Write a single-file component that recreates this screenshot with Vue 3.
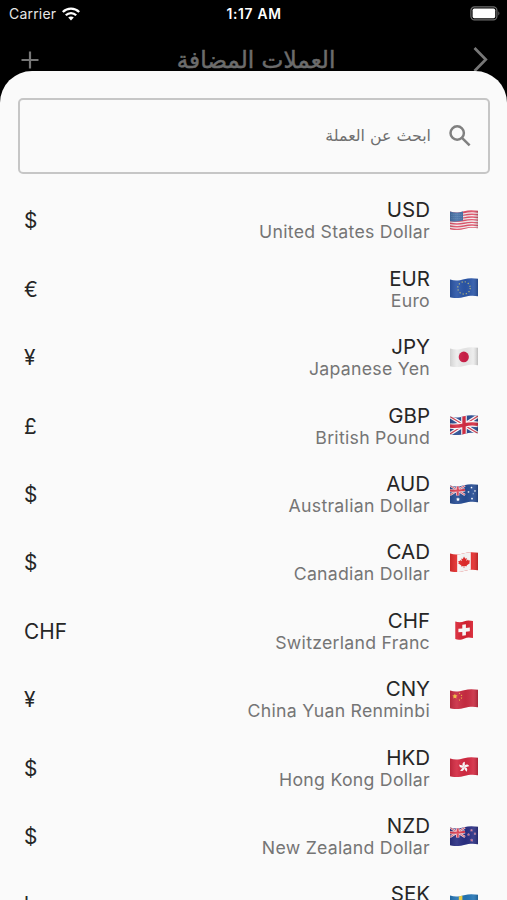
<template>
    <div class="screen" dir="rtl">
        <header class="top">
            <div class="status-bar" dir="ltr">
                <div class="carrier">
                    <span>Carrier</span>
                    <svg width="18" height="14" viewBox="0 0 18 14">
                        <g fill="none" stroke="#fff" stroke-width="2.3">
                            <path d="M0.8 5 C5.4 0.4 12.6 0.4 17.2 5" />
                            <path d="M3.8 8.2 C6.7 5.3 11.3 5.3 14.2 8.2" />
                        </g>
                        <path d="M6.2 10.6 C7.8 9.1 10.2 9.1 11.8 10.6 L9 13.4 Z" fill="#fff" />
                    </svg>
                </div>
                <span class="time">1:17 AM</span>
                <svg class="battery" width="31" height="15" viewBox="0 0 31 15">
                    <rect x="0.9" y="0.9" width="26" height="13" rx="3.6" fill="none" stroke="#6d6d6d" stroke-width="1.2" />
                    <rect x="2.6" y="2.6" width="22.6" height="9.6" rx="1.6" fill="#fff" />
                    <path d="M28.4 5.2 Q30.4 7.4 28.4 9.6 Z" fill="#6d6d6d" />
                </svg>
            </div>
            <div class="nav-bar">
                <svg class="chevron" width="15" height="25" viewBox="0 0 15 25">
                    <path d="M1.5 1 L12.8 12.5 L1.5 24" />
                </svg>
                <h1>العملات المضافة</h1>
                <svg class="plus" width="18" height="18" viewBox="0 0 18 18">
                    <path d="M9 0.5 V17.5 M0.5 9 H17.5" />
                </svg>
            </div>
        </header>

        <main class="sheet">
            <div class="search">
                <svg width="22" height="22" viewBox="0 0 22 22">
                    <circle cx="8.2" cy="8" r="6.7" />
                    <path d="M13 12.8 L20.6 20.4" />
                </svg>
                <span>ابحث عن العملة</span>
            </div>

            <ul class="list">
                <li v-for="item in currencies" :key="item.code" class="row">
                    <svg class="flag" width="28" height="20" viewBox="0 0 28 20">
                        <defs>
                            <clipPath :id="'wave-' + item.code">
                                <path v-if="item.code === 'CHF'" d="M5.3 1.6 C9 2.8 12 2.4 14.5 1.2 S20 0.3 23 1 V18 C19 17 17 17.3 14.5 18.4 S8.5 20.3 5.3 19 Z" />
                                <path v-else d="M0 1.6 C5 3 9 2.6 14 1.2 S23 -0.1 28 0.8 V18.2 C23 17.2 19 17.6 14 18.9 S5 20.6 0 19.2 Z" />
                            </clipPath>
                            <linearGradient :id="'shade-' + item.code">
                                <stop offset="0" stop-color="#000" stop-opacity="0.12" />
                                <stop offset="0.25" stop-color="#fff" stop-opacity="0.08" />
                                <stop offset="0.55" stop-color="#000" stop-opacity="0.04" />
                                <stop offset="0.82" stop-color="#fff" stop-opacity="0.08" />
                                <stop offset="1" stop-color="#000" stop-opacity="0.2" />
                            </linearGradient>
                        </defs>
                        <g :clip-path="`url(#wave-${item.code})`">
                            <rect width="28" height="20" :fill="item.color" />

                            <g v-if="item.code === 'USD'">
                                <path
                                    v-for="n in 6"
                                    :key="n"
                                    :d="`M0 ${n * 2.7 + 1.1} q7 1.6 14 0 t14 -0.4`"
                                    fill="none"
                                    stroke="#f6edf0"
                                    stroke-width="1.3"
                                />
                                <path d="M0 0 H13 V10.6 Q6 12.4 0 11.2 Z" fill="#4671a8" />
                                <path d="M1.5 4.3 H12 M1.5 6.5 H12 M1.5 8.7 H12" stroke="#7fa2c8" stroke-width="0.7" stroke-dasharray="0.8 1.2" />
                            </g>

                            <circle
                                v-else-if="item.code === 'EUR'"
                                cx="14"
                                cy="9.9"
                                r="6.2"
                                fill="none"
                                stroke="#b3b67c"
                                stroke-width="1.2"
                                stroke-dasharray="1.2 2.046"
                            />

                            <ellipse v-else-if="item.code === 'JPY'" cx="13.8" cy="9.9" rx="5.1" ry="5.3" fill="#cd1f48" />

                            <g v-else-if="item.code === 'GBP'" fill="none">
                                <path d="M0 1.5 L28 18.5 M0 19 L28 1" stroke="#fff" stroke-width="3.6" />
                                <path d="M0 1.5 L28 18.5 M0 19 L28 1" stroke="#d33d50" stroke-width="1.1" />
                                <path d="M14 0 V20 M0 11 Q7 11.8 14 10 T28 9.4" stroke="#fff" stroke-width="5.6" />
                                <path d="M14 0 V20 M0 11 Q7 11.8 14 10 T28 9.4" stroke="#d52d43" stroke-width="3.4" />
                            </g>

                            <g v-else-if="item.code === 'AUD' || item.code === 'NZD'">
                                <g fill="none">
                                    <path d="M0 1.5 L15 11 M0 11 L15 1.5" stroke="#f2dbe3" stroke-width="2.2" />
                                    <path d="M0 1.5 L15 11 M0 11 L15 1.5" stroke="#d64b5e" stroke-width="0.8" />
                                    <path d="M7.7 0 V11.4 M0 6.6 Q7 7.4 15 5.8" stroke="#f2dbe3" stroke-width="3.4" />
                                    <path d="M7.7 0 V11.4 M0 6.6 Q7 7.4 15 5.8" stroke="#dc3e50" stroke-width="2" />
                                </g>
                                <g v-if="item.code === 'AUD'" fill="#fff">
                                    <path :d="star(8, 15.4, 2.1)" />
                                    <path :d="star(21.5, 3.6, 1.2)" />
                                    <path :d="star(18.5, 8, 1.2)" />
                                    <path :d="star(25, 7, 1.2)" />
                                    <path :d="star(22, 14.6, 1.3)" />
                                    <circle cx="23.2" cy="9.8" r="0.5" />
                                </g>
                                <g v-else fill="#e04560" stroke="#d9bfd8" stroke-width="0.4">
                                    <path :d="star(21.5, 4.3, 1.2)" />
                                    <path :d="star(18.5, 8.6, 1.2)" />
                                    <path :d="star(25, 7.7, 1.1)" />
                                    <path :d="star(21.7, 14.2, 1.4)" />
                                </g>
                            </g>

                            <g v-else-if="item.code === 'CAD'">
                                <path d="M7.2 0 H20.8 V20 H7.2 Z" fill="#fafafa" />
                                <path
                                    d="M14 4.4 L15.3 6.8 L16.8 6 L16.3 9 L18 7.5 L18.5 8.6 L20 8.4 L19.3 10.4 L20 11 L16.6 13.4 L16.9 14.3 L14.3 13.9 V16 H13.7 V14 L11.1 14.5 L11.4 13.5 L8 11.3 L8.8 10.7 L8.2 8.9 L9.7 9 L10.1 7.9 L11.8 9.3 L11.3 6.4 L12.8 7 Z"
                                    fill="#e32b2b"
                                />
                            </g>

                            <path v-else-if="item.code === 'CHF'" d="M12.3 4.7 L15.9 4.2 V8 L19.8 7.6 V11.2 L15.9 11.7 V15.3 L12.3 15.8 V12.1 L8.4 12.3 V8.7 L12.3 8.4 Z" fill="#fff" />

                            <g v-else-if="item.code === 'CNY'" fill="#f5c242">
                                <path :d="star(4.9, 7.4, 2.7)" />
                                <path :d="star(9.5, 4.3, 0.9)" />
                                <path :d="star(11.5, 6.3, 0.9)" />
                                <path :d="star(11.5, 9, 0.9)" />
                                <path :d="star(9.5, 11, 0.9)" />
                            </g>

                            <g v-else-if="item.code === 'HKD'" fill="#fff">
                                <path
                                    v-for="n in 5"
                                    :key="n"
                                    d="M14 10 C11.4 8.4 12.2 5 15.1 4.8 C14.1 6.2 15.8 7.4 14 10 Z"
                                    :transform="`rotate(${n * 72} 14 10)`"
                                />
                            </g>

                            <path v-else-if="item.code === 'SEK'" d="M10.6 0 V20 M0 10.6 Q7 11.4 14 10 T28 9.4" fill="none" stroke="#f2cf3c" stroke-width="3.6" />

                            <rect width="28" height="20" :fill="`url(#shade-${item.code})`" />
                        </g>
                    </svg>
                    <div class="names">
                        <span class="code">{{ item.code }}</span>
                        <span class="name">{{ item.name }}</span>
                    </div>
                    <span class="symbol">{{ item.symbol }}</span>
                </li>
            </ul>
        </main>
    </div>
</template>

<script setup>
const currencies = [
    { code: "USD", name: "United States Dollar", symbol: "$", color: "#e0536a" },
    { code: "EUR", name: "Euro", symbol: "€", color: "#2b56a8" },
    { code: "JPY", name: "Japanese Yen", symbol: "¥", color: "#ececec" },
    { code: "GBP", name: "British Pound", symbol: "£", color: "#2b4d92" },
    { code: "AUD", name: "Australian Dollar", symbol: "$", color: "#274d94" },
    { code: "CAD", name: "Canadian Dollar", symbol: "$", color: "#e32b2b" },
    { code: "CHF", name: "Switzerland Franc", symbol: "CHF", color: "#d82232" },
    { code: "CNY", name: "China Yuan Renminbi", symbol: "¥", color: "#ca2c42" },
    { code: "HKD", name: "Hong Kong Dollar", symbol: "$", color: "#d42a42" },
    { code: "NZD", name: "New Zealand Dollar", symbol: "$", color: "#2a2f83" },
    { code: "SEK", name: "Swedish Krona", symbol: "kr", color: "#2475b5" },
];

// five-pointed star path around (cx, cy)
function star(cx, cy, r) {
    const points = [];
    for (let i = 0; i < 10; i++) {
        const radius = i % 2 ? r * 0.5 : r;
        const angle = (Math.PI / 5) * i - Math.PI / 2;
        points.push(
            `${(cx + radius * Math.cos(angle)).toFixed(2)} ${(cy + radius * Math.sin(angle)).toFixed(2)}`
        );
    }
    return `M${points.join(" L")} Z`;
}
</script>

<style>
body {
    margin: 0;
    background: #000;
}
</style>

<style scoped>
.screen {
    display: flex;
    flex-direction: column;
    height: 100vh;
    overflow: hidden;
    background: #000;
    font-family: Inter, "DejaVu Sans", sans-serif;
}

.top {
    flex: none;
    height: 71px;
}

.status-bar {
    display: grid;
    grid-template-columns: 1fr auto 1fr;
    align-items: center;
    height: 27px;
    padding: 0 6px 0 9px;
    color: #fff;
    font-size: 14px;
}

.carrier {
    display: flex;
    align-items: center;
    gap: 6px;
    color: #e6e6e6;
    letter-spacing: 0.2px;
}

.time {
    padding-right: 2px;
    font-size: 13.8px;
    font-weight: 600;
    letter-spacing: 0.7px;
}

.battery {
    justify-self: end;
}

.nav-bar {
    display: flex;
    align-items: center;
    justify-content: space-between;
    height: 65px;
    padding: 0 19px 0 21px;
    direction: rtl;
}

.nav-bar h1 {
    margin: 0;
    color: #6c6c6c;
    font-family: "DejaVu Sans", sans-serif;
    font-size: 23.2px;
    font-weight: 400;
    line-height: 26px;
    white-space: nowrap;
    -webkit-text-stroke: 0.5px #6c6c6c;
}

.chevron,
.plus {
    fill: none;
    stroke: #777;
    stroke-width: 2.2;
}

.chevron {
    stroke-width: 2.7;
}

.sheet {
    position: relative;
    flex: 1;
    min-height: 0;
    overflow: hidden;
    padding: 26.5px 17px 0 18px;
    border-radius: 32px 32px 0 0;
    background: #fafafa;
}

.search {
    display: flex;
    align-items: center;
    gap: 18px;
    height: 76px;
    padding: 0 17px;
    box-sizing: border-box;
    border: 2px solid #c6c6c6;
    border-radius: 5px;
    color: #6f6f6f;
    font-family: "DejaVu Sans", sans-serif;
    font-size: 15.8px;
}

.search svg {
    flex: none;
    fill: none;
    stroke: #808080;
    stroke-width: 2.5;
}

.list {
    margin: 0;
    padding: 13.3px 0 0;
    list-style: none;
}

.row {
    display: flex;
    align-items: center;
    height: 68.4px;
    padding: 0 12px 0 6px;
}

.flag {
    flex: none;
    margin-bottom: 2px;
}

.names {
    display: flex;
    flex: 1;
    flex-direction: column;
    margin-right: 20px;
}

.code {
    color: #262626;
    font-size: 20.5px;
    line-height: 23px;
}

.name {
    color: #757575;
    font-size: 17.7px;
    line-height: 22px;
    letter-spacing: 0.27px;
}

.symbol {
    color: #262626;
    font-size: 20.8px;
}
</style>
